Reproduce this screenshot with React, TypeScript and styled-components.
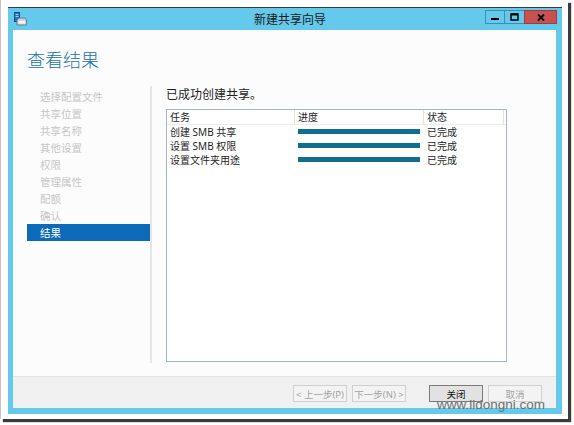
import React from "react";
import styled, { createGlobalStyle } from "styled-components";

const GlobalStyle = createGlobalStyle`
  html, body { margin: 0; padding: 0; background: #ffffff; }
  body { font-family: "Noto Sans", "Noto Sans CJK SC", sans-serif; }
  * { box-sizing: border-box; }
`;

const Page = styled.div`
  position: relative;
  width: 574px;
  height: 425px;
  overflow: hidden;
  background: #ffffff;
`;

const Frame = styled.div`
  width: 568px;
  height: 419px;
  background: #ffffff;
  border-left: 1px solid #c4c4c4;
  box-shadow: 3px 3px 1px rgba(25, 25, 25, 0.85);
  padding: 7px 0 0 7px;
`;

const Window = styled.div`
  width: 554px;
  height: 407px;
  background: #65c9eb;
  border-top: 1px solid #3a3a3a;
  display: flex;
  flex-direction: column;
`;

const TitleBar = styled.div`
  height: 22px;
  display: flex;
  align-items: flex-start;
  padding: 0 5px 0 6px;
`;

const AppIcon = styled.svg`
  margin-top: 4px;
  width: 13px;
  height: 14px;
  flex: none;
`;

const Title = styled.div`
  flex: 1;
  text-align: center;
  padding-left: 67px;
  line-height: 22px;
  font-size: 12px;
  color: #1b1b1b;
  font-family: "Noto Sans CJK SC", sans-serif;
`;

const Controls = styled.div`
  display: flex;
  margin-top: 2px;
`;

const CtrlButton = styled.div<{ $w: number; $close?: boolean }>`
  width: ${(p) => p.$w}px;
  height: 14px;
  display: flex;
  align-items: center;
  justify-content: center;
  background: ${(p) => (p.$close ? "#c75050" : "transparent")};
  border: 1px solid ${(p) => (p.$close ? "#9c3e3e" : "#3d8fb0")};
  margin-left: -1px;
`;

const Client = styled.div`
  flex: 1;
  display: flex;
  flex-direction: column;
  margin: 0 6px 6px 5px;
`;

const Content = styled.div`
  flex: 1;
  display: flex;
  flex-direction: column;
  background: #fcfcfc;
  padding: 17px 0 13px 14px;
`;

const Heading = styled.h1`
  margin: 0 0 15px;
  font-size: 18px;
  line-height: 24px;
  font-weight: 300;
  color: #2273a6;
  font-family: "Noto Sans CJK SC", sans-serif;
`;

const Body = styled.div`
  flex: 1;
  display: flex;
`;

const Nav = styled.div`
  width: 123px;
  padding-top: 2px;
  display: flex;
  flex-direction: column;
`;

const NavItem = styled.div<{ $active?: boolean }>`
  height: 17px;
  line-height: 17px;
  padding-left: 13px;
  font-size: 10.5px;
  font-family: "Noto Sans CJK SC", sans-serif;
  color: ${(p) => (p.$active ? "#ffffff" : "#c6c6c6")};
  background: ${(p) => (p.$active ? "#0d6ab8" : "transparent")};
`;

const RightPanel = styled.div`
  border-left: 2px solid #e6e6e6;
  padding-left: 14px;
  display: flex;
  flex-direction: column;
`;

const Message = styled.div`
  font-size: 12px;
  line-height: 16px;
  margin-bottom: 7px;
  color: #1e1e1e;
  font-family: "Noto Sans CJK SC", sans-serif;
`;

const Table = styled.div`
  width: 341px;
  height: 253px;
  border: 1px solid #a3b5c9;
  background: #ffffff;
  display: grid;
  grid-template-columns: 128px 129px 80px 1fr;
  grid-auto-rows: 14px;
  grid-template-rows: 15px;
  align-content: start;
  font-family: "Noto Sans", "Noto Sans CJK SC", sans-serif;
`;

const HeadCell = styled.div`
  height: 15px;
  line-height: 14px;
  padding-left: 3px;
  font-size: 10px;
  color: #1e1e1e;
  border-right: 1px solid #e2e2e2;
  border-bottom: 1px solid #ececec;
`;

const HeadFill = styled.div`
  border-bottom: 1px solid #ececec;
`;

const Cell = styled.div`
  line-height: 14px;
  padding-left: 3px;
  font-size: 10px;
  color: #1e1e1e;
  white-space: nowrap;
  overflow: hidden;
`;

const BarCell = styled.div`
  display: flex;
  align-items: center;
  padding: 0 4px 1px 3px;
`;

const Bar = styled.div`
  height: 5px;
  width: 100%;
  background: #0f6e8c;
`;

const Footer = styled.div`
  height: 32px;
  background: #f0f0f0;
  border-top: 1px solid #e4e4e4;
  display: flex;
  align-items: flex-start;
  justify-content: flex-end;
  padding: 8px 14px 0 0;
  gap: 5px;
`;

const Button = styled.div<{ $primary?: boolean; $spaced?: boolean }>`
  width: 54px;
  height: 17px;
  display: flex;
  align-items: center;
  justify-content: center;
  font-size: 9.5px;
  font-family: "Noto Sans", "Noto Sans CJK SC", sans-serif;
  margin-left: ${(p) => (p.$spaced ? "18px" : "0")};
  color: ${(p) => (p.$primary ? "#111111" : "#a2a2a2")};
  background: ${(p) => (p.$primary ? "#e2e2e2" : "#f3f3f3")};
  border: 1px solid ${(p) => (p.$primary ? "#7a7a7a" : "#d0d0d0")};
`;

const Watermark = styled.div`
  position: absolute;
  left: 437px;
  top: 397px;
  font-family: "Liberation Sans", Arial, sans-serif;
  font-size: 13.5px;
  line-height: 16px;
  color: #6e6e6e;
  pointer-events: none;
`;

const navItems = [
  "选择配置文件",
  "共享位置",
  "共享名称",
  "其他设置",
  "权限",
  "管理属性",
  "配额",
  "确认",
  "结果",
];

const rows = ["创建 SMB 共享", "设置 SMB 权限", "设置文件夹用途"];

export default function App() {
  return (
    <>
      <GlobalStyle />
      <Page>
        <Frame>
          <Window>
            <TitleBar>
              <AppIcon viewBox="0 0 13 14">
                <rect x="0.5" y="0.5" width="5" height="9" fill="#1f74c6" stroke="#0f4f8f" strokeWidth="1" />
                <rect x="1.5" y="2" width="3" height="1" fill="#9fd0ff" />
                <rect x="1.5" y="4" width="3" height="1" fill="#9fd0ff" />
                <path d="M3 8 L5 6 H11 L12.5 8 V13 H3 Z" fill="#c9d3dc" stroke="#6d7f8f" strokeWidth="1" />
                <rect x="4.5" y="9" width="6.5" height="2.5" fill="#f4f7fa" />
              </AppIcon>
              <Title>新建共享向导</Title>
              <Controls>
                <CtrlButton $w={20}>
                  <svg width="8" height="8" viewBox="0 0 8 8">
                    <rect x="0" y="5" width="8" height="2" fill="#000" />
                  </svg>
                </CtrlButton>
                <CtrlButton $w={21}>
                  <svg width="9" height="8" viewBox="0 0 9 8">
                    <rect x="1" y="1" width="7" height="6" fill="none" stroke="#000" strokeWidth="1.5" />
                    <rect x="1" y="0.5" width="7" height="2" fill="#000" />
                  </svg>
                </CtrlButton>
                <CtrlButton $w={33} $close>
                  <svg width="8" height="7" viewBox="0 0 8 7">
                    <path d="M1 0.5 L7 6.5 M7 0.5 L1 6.5" stroke="#000" strokeWidth="1.8" />
                  </svg>
                </CtrlButton>
              </Controls>
            </TitleBar>
            <Client>
              <Content>
                <Heading>查看结果</Heading>
                <Body>
                  <Nav>
                    {navItems.map((n, i) => (
                      <NavItem key={n} $active={i === navItems.length - 1}>
                        {n}
                      </NavItem>
                    ))}
                  </Nav>
                  <RightPanel>
                    <Message>已成功创建共享。</Message>
                    <Table>
                      <HeadCell>任务</HeadCell>
                      <HeadCell>进度</HeadCell>
                      <HeadCell>状态</HeadCell>
                      <HeadFill />
                      {rows.map((r) => (
                        <React.Fragment key={r}>
                          <Cell>{r}</Cell>
                          <BarCell>
                            <Bar />
                          </BarCell>
                          <Cell>已完成</Cell>
                          <div />
                        </React.Fragment>
                      ))}
                    </Table>
                  </RightPanel>
                </Body>
              </Content>
              <Footer>
                <Button>&lt; 上一步(P)</Button>
                <Button>下一步(N) &gt;</Button>
                <Button $primary $spaced>
                  关闭
                </Button>
                <Button>取消</Button>
              </Footer>
            </Client>
          </Window>
        </Frame>
        <Watermark>www.lidongni.com</Watermark>
      </Page>
    </>
  );
}
